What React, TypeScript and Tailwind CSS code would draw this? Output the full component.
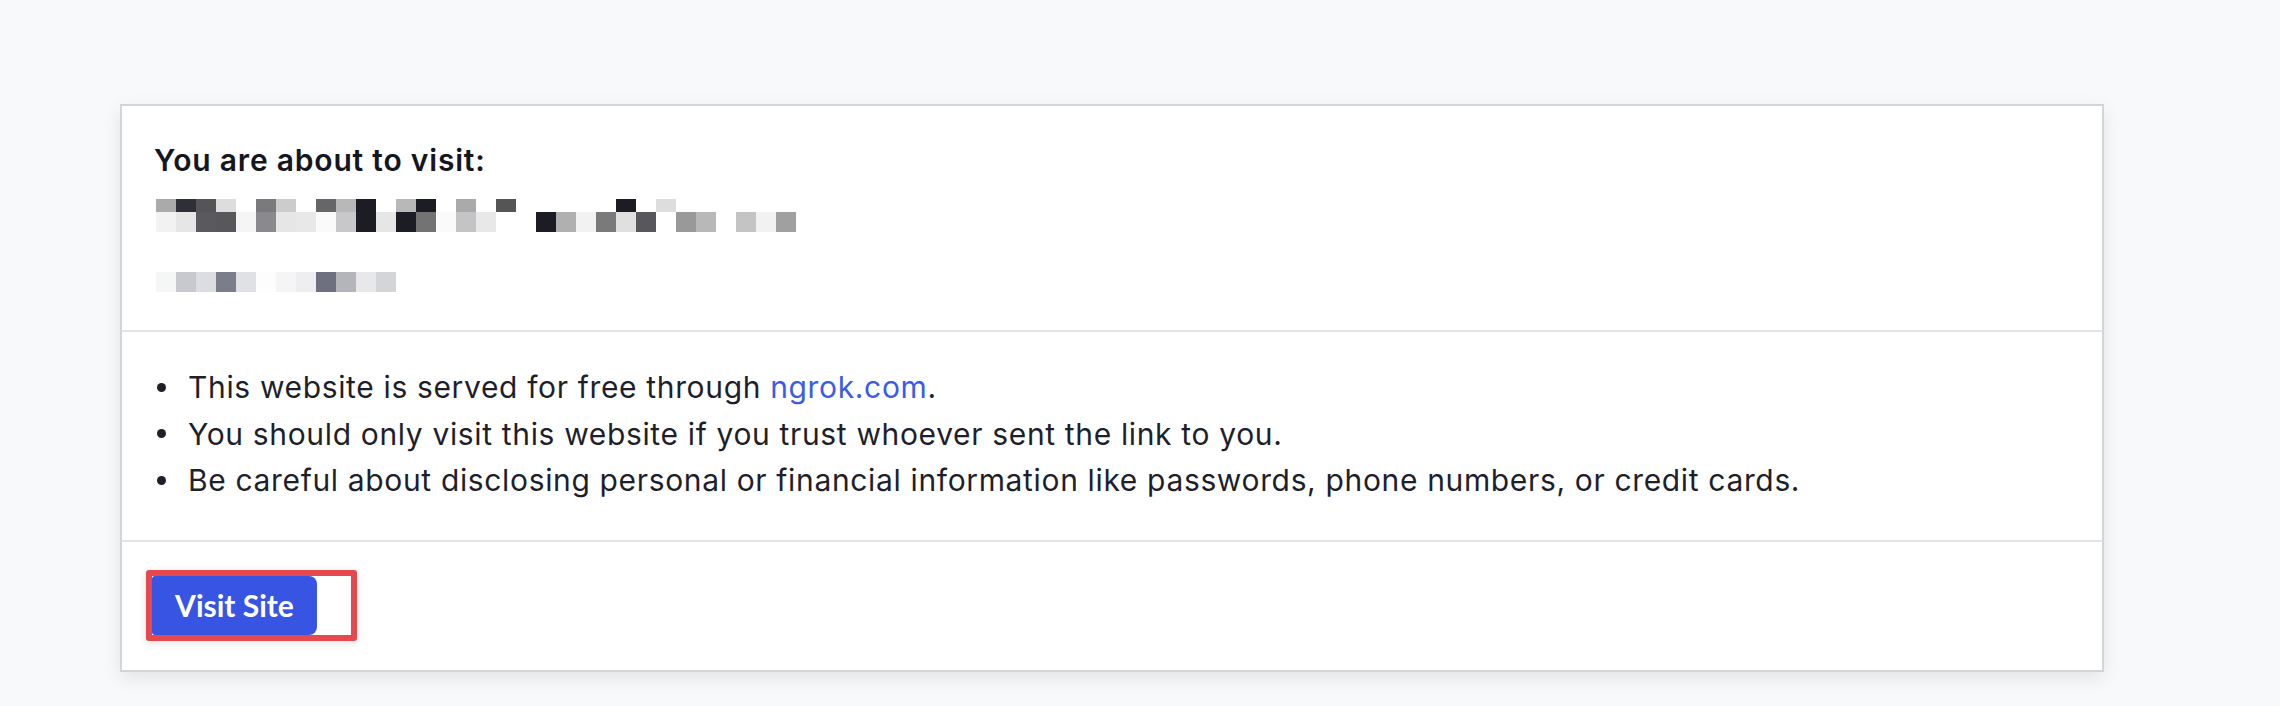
import React from "react";

const row1a: (string | null)[] = [
  "#aaaaaa", "#2f2f38", "#555558", "#dddddd", null, "#7a7a7c", "#cccccc", null,
  "#666668", "#b8b8b8", "#1c1c24", null, "#b8b8b8", "#1c1c24", null, "#aaaaaa",
  null, "#555555", null, null, null, null, null, "#1c1c24", null, "#dddddd",
  null, null, null, null, null, null,
];
const row1b: (string | null)[] = [
  "#f2f2f2", "#e6e6e6", "#5a5a5e", "#58585c", "#f5f5f5", "#8a8a8e", "#e6e6e6", "#e8e8e8",
  "#fafafa", "#c8c8ca", "#1c1c24", "#e6e6e6", "#1c1c24", "#737373", "#fafafa", "#c4c4c6",
  "#e8e8e8", null, null, "#1c1c24", "#b0b0b0", "#f2f2f2", "#7a7a7a", "#e0e0e0",
  "#58585c", null, "#999999", "#b8b8b8", null, "#c4c4c4", "#f2f2f2", "#a0a0a0",
];
const row2: (string | null)[] = [
  "#f5f7f7", "#c8c9ce", "#dcdde0", "#7a7d8a", "#e0e1e5", "#fdfdfd",
  "#f5f5f6", "#eeeef0", "#6e7080", "#b4b5ba", "#e8e8ea", "#d4d5d9",
];

function Mosaic({ cells, h }: { cells: (string | null)[]; h: string }) {
  return (
    <div className="flex">
      {cells.map((c, i) => (
        <div
          key={i}
          className={`w-[20px] ${h}`}
          style={{ backgroundColor: c ?? "transparent" }}
        />
      ))}
    </div>
  );
}

function Bullet({ children }: { children: React.ReactNode }) {
  return (
    <li className="flex items-center">
      <span className="ml-[3px] mr-[22px] h-[9px] w-[9px] shrink-0 rounded-full bg-[#1f1f2c]" />
      <span>{children}</span>
    </li>
  );
}

export default function App() {
  return (
    <div
      className="min-h-[706px] w-full bg-[#f8f9fb] pt-[104px] pl-[120px]"
      style={{ fontFamily: "Inter, 'Noto Sans', sans-serif" }}
    >
      <div className="w-[1984px] border-2 border-[#d5d5d9] bg-white text-[#1f1f2c] shadow-[0_6px_18px_rgba(0,0,0,0.09)]">
        <div className="px-[32px] pt-[32px] pb-[38px]">
          <h1 className="text-[30px] font-semibold leading-[45px] tracking-[0.8px] text-[#16161f]">
            You are about to visit:
          </h1>
          <div className="ml-[2px] mt-[16px]">
            <Mosaic cells={row1a} h="h-[13px]" />
            <Mosaic cells={row1b} h="h-[20px]" />
          </div>
          <div className="ml-[2px] mt-[40px]">
            <Mosaic cells={row2} h="h-[20px]" />
          </div>
        </div>
        <div className="border-t-2 border-[#e4e4e7] px-[32px] pt-[32px] pb-[36px]">
          <ul className="text-[30px] leading-[46.5px] tracking-[0.65px]">
            <Bullet>
              This website is served for free through{" "}
              <span className="text-[#3b5bea]">ngrok.com</span>.
            </Bullet>
            <Bullet>
              You should only visit this website if you trust whoever sent the link to you.
            </Bullet>
            <Bullet>
              Be careful about disclosing personal or financial information like passwords, phone numbers, or credit cards.
            </Bullet>
          </ul>
        </div>
        <div className="border-t-2 border-[#e4e4e7] px-[24px] pt-[28px] pb-[29px]">
          <div className="inline-flex h-[71px] w-[211px] rounded-[3px] border-[6px] border-[#e5484d] bg-white shadow-[0_2px_8px_rgba(0,0,0,0.12)]">
            <button
              className="flex h-full w-[165px] items-center justify-center rounded-r-[8px] rounded-l-[3px] bg-[#3755e2] text-[30px] font-bold text-white"
              style={{ fontFamily: "Lato, 'Noto Sans', sans-serif" }}
            >
              Visit Site
            </button>
          </div>
        </div>
      </div>
    </div>
  );
}
